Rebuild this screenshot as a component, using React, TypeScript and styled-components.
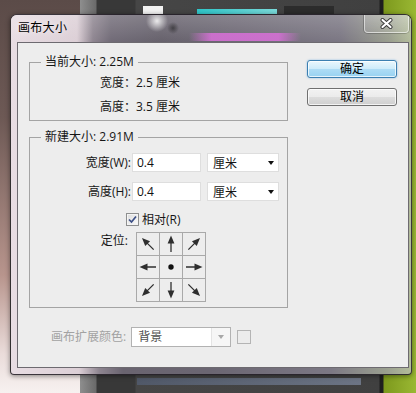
import * as React from 'react';
import styled, { createGlobalStyle } from 'styled-components';

const GlobalStyle = createGlobalStyle`
  html, body {
    margin: 0;
    padding: 0;
  }
  body {
    width: 416px;
    height: 393px;
    overflow: hidden;
    font-family: "Open Sans", "Noto Sans CJK SC", sans-serif;
    font-size: 12px;
    color: #161616;
  }
`;

/**
 * Blurred Photoshop workspace behind the dialog.
 */
const Desktop = styled.div`
  position: relative;
  width: 416px;
  height: 393px;
  overflow: hidden;
  background:
    linear-gradient(#f2f2f2, #f2f2f2) 143px 6px / 20px 8px no-repeat,
    linear-gradient(to right, #2fc6c9, #7adada) 197px 9px / 80px 5px no-repeat,
    linear-gradient(#2c2c2c, #2c2c2c) 284px 6px / 50px 8px no-repeat,
    linear-gradient(to right, #505868, #6c7484) 137px 378px / 224px 7px no-repeat,
    linear-gradient(to bottom, #5b4b48, #6d5955 30%, #b8958d 70%, #eadcda 90%, #f7f1f0) 0 0 / 80px 100% no-repeat,
    linear-gradient(to right, #8e8e8e 80px, #6a6a6a 96px, #383838 97px, #383838 135px, #464646 136px, #404040 379px, #1f1f1f 380px, #1f1f1f 383px, #7d991d 384px, #9ab833 416px);
`;

/**
 * Aero glass window frame (sides and bottom edge).
 */
const Window = styled.div`
  position: absolute;
  left: 10px;
  top: 14px;
  width: 402px;
  height: 361px;
  box-sizing: border-box;
  display: flex;
  flex-direction: column;
  overflow: hidden;
  border: 1px solid rgba(28, 24, 30, 0.85);
  border-radius: 7px 7px 4px 4px;
  box-shadow: 0 1px 5px rgba(0, 0, 0, 0.45);
  background: linear-gradient(to right, #e8dde3, #dccfd6 17%, #8e8590 22%, #6a6470 28%, #6b6672 50%, #7c7884 80%, #9ba090 94%, #b3bc9b);
`;

/**
 * Glass caption strip: blurred shapes of the workspace show through.
 */
const TitleBar = styled.div`
  height: 27px;
  flex: none;
  display: flex;
  align-items: flex-start;
  justify-content: space-between;
  padding: 0 2px 0 7px;
  background:
    radial-gradient(circle at 146px 6px, rgba(255, 255, 255, 0.85), rgba(255, 255, 255, 0) 11px),
    radial-gradient(circle at 162px 13px, rgba(25, 25, 25, 0.55), rgba(25, 25, 25, 0) 6px),
    linear-gradient(to right, rgba(200, 100, 200, 0), rgba(212, 112, 212, 0.9) 20%, rgba(212, 112, 212, 0.9) 80%, rgba(200, 100, 200, 0)) 178px 18px / 112px 8px no-repeat,
    linear-gradient(to bottom, rgba(255, 255, 255, 0.18), rgba(255, 255, 255, 0) 27px),
    linear-gradient(to right, #e8dde3 0px, #dccfd6 66px, #8e8590 82px, #716b77 100px, #66616c 150px, #6e6975 220px, #7b7783 330px, #999d8e 378px, #b3bc9b 400px);
`;

const Title = styled.div`
  margin-top: 5px;
  line-height: 16px;
  font-size: 12px;
  letter-spacing: 0.3px;
  color: #000;
  text-shadow: 0 0 6px rgba(255, 255, 255, 0.9);
`;

const CloseButton = styled.div`
  width: 45px;
  height: 18px;
  box-sizing: border-box;
  display: flex;
  align-items: center;
  justify-content: center;
  border: 1px solid rgba(255, 255, 255, 0.55);
  border-top: none;
  border-radius: 0 0 4px 4px;
  box-shadow: 0 0 0 1px rgba(0, 0, 0, 0.2);
  background: linear-gradient(rgba(255, 255, 255, 0.2), rgba(255, 255, 255, 0.08));
`;

const Client = styled.div`
  flex: 1;
  display: flex;
  flex-direction: column;
  box-sizing: border-box;
  margin: 0 2px 6px 6px;
  padding: 11px 0 0 11px;
  background: #ededed;
  border: 1px solid #6d6a70;
`;

const TopRow = styled.div`
  display: flex;
  align-items: flex-start;
`;

const LeftColumn = styled.div`
  display: flex;
  flex-direction: column;
  gap: 8px;
`;

const Group = styled.fieldset<{ $pad: string }>`
  margin: 0;
  min-width: 0;
  width: 259px;
  box-sizing: border-box;
  padding: ${p => p.$pad};
  border: 1px solid #a4a4a4;
`;

const Legend = styled.legend`
  margin-left: 11px;
  padding: 0 4px;
  line-height: 16px;
  font-size: 12px;
`;

const InfoRow = styled.div`
  padding-left: 70px;
  line-height: 24px;
  height: 24px;
`;

const FormRow = styled.div<{ $top: number }>`
  display: flex;
  align-items: center;
  margin-top: ${p => p.$top}px;
`;

const FieldLabel = styled.label<{ $width: number }>`
  width: ${p => p.$width}px;
  text-align: right;
  line-height: 16px;
`;

const TextBox = styled.div`
  width: 69px;
  height: 19px;
  margin-left: 1px;
  box-sizing: border-box;
  padding-left: 4px;
  line-height: 17px;
  background: #fff;
  border: 1px solid #dedede;
  color: #111;
`;

const UnitSelect = styled.div`
  width: 72px;
  height: 19px;
  margin-left: 6px;
  box-sizing: border-box;
  display: flex;
  align-items: center;
  justify-content: space-between;
  padding: 0 4px 0 5px;
  background: #fff;
  border: 1px solid #dedede;
`;

const Caret = styled.span<{ $color: string }>`
  width: 0;
  height: 0;
  border-left: 3.5px solid transparent;
  border-right: 3.5px solid transparent;
  border-top: 4px solid ${p => p.$color};
`;

const CheckRow = styled.div`
  display: flex;
  align-items: center;
  padding-left: 96px;
  margin-top: 12px;
  height: 13px;
`;

const CheckBox = styled.span`
  width: 13px;
  height: 13px;
  box-sizing: border-box;
  display: flex;
  align-items: center;
  justify-content: center;
  border: 1px solid #8e8f8f;
  background: linear-gradient(135deg, #dcdcdc, #fbfbfb);
  box-shadow: inset 0 0 0 1px #f4f4f4;
`;

const CheckText = styled.span`
  margin-left: 3px;
  line-height: 16px;
`;

const AnchorRow = styled.div`
  display: flex;
  align-items: flex-start;
  margin-top: 6px;
`;

const AnchorLabel = styled(FieldLabel)`
  padding-top: 1px;
`;

const AnchorGrid = styled.div`
  margin-left: 8px;
  display: grid;
  grid-template-columns: repeat(3, 22px);
  grid-template-rows: repeat(3, 22px);
  gap: 1px;
  padding: 1px;
  background: #a9a9a9;
`;

const AnchorCell = styled.div`
  background: #ededed;
  display: flex;
  align-items: center;
  justify-content: center;
`;

const ButtonColumn = styled.div`
  margin-left: 19px;
  margin-top: 6px;
  display: flex;
  flex-direction: column;
  gap: 10px;
`;

const DialogButton = styled.button<{ $primary?: boolean }>`
  width: 90px;
  height: 18px;
  box-sizing: border-box;
  padding: 0;
  font: inherit;
  font-size: 12px;
  line-height: 16px;
  color: #000;
  border-radius: 3px;
  border: 1px solid ${p => (p.$primary ? '#3c7fb1' : '#707070')};
  background: ${p =>
    p.$primary
      ? 'linear-gradient(#eaf7fd, #cdebfa 50%, #aedcf5 50%, #98d2f1)'
      : 'linear-gradient(#f2f2f2, #ebebeb 50%, #dddddd 50%, #cfcfcf)'};
  box-shadow: inset 0 0 0 1px rgba(255, 255, 255, 0.75)
    ${p => (p.$primary ? ', 0 0 2px rgba(60, 150, 220, 0.6)' : '')};
`;

const BottomRow = styled.div`
  display: flex;
  align-items: center;
  margin-top: 19px;
  padding-left: 22px;
  height: 20px;
`;

const DisabledLabel = styled.span`
  color: #a2a2a2;
  line-height: 16px;
`;

const DisabledSelect = styled.div`
  width: 100px;
  height: 20px;
  margin-left: 5px;
  box-sizing: border-box;
  display: flex;
  border: 1px solid #b2b2b2;
  background: #fff;
`;

const SelectText = styled.span`
  flex: 1;
  padding-left: 6px;
  line-height: 18px;
  color: #505050;
`;

const SelectArrow = styled.span`
  width: 18px;
  display: flex;
  align-items: center;
  justify-content: center;
  background: #f6f6f6;
  border-left: 1px solid #e4e4e4;
`;

const Swatch = styled.span`
  width: 14px;
  height: 14px;
  margin-left: 6px;
  box-sizing: border-box;
  border: 1px solid #b4b4b4;
  background: #ececec;
`;

const ANCHORS: (number | null)[] = [-45, 0, 45, -90, null, 90, -135, 180, 135];

/**
 * One arrow of the anchor grid, drawn pointing up and rotated.
 */
function Arrow({ angle }: { angle: number | null }) {
  if (angle === null) {
    return (
      <svg width="22" height="22" viewBox="0 0 22 22">
        <circle cx="11" cy="11" r="2.7" fill="#111" />
      </svg>
    );
  }
  return (
    <svg width="22" height="22" viewBox="0 0 22 22">
      <g transform={`rotate(${angle} 11 11)`}>
        <line x1="11" y1="19" x2="11" y2="8" stroke="#2e2e2e" strokeWidth="1.3" />
        <polygon points="11,2.5 7.6,10.5 14.4,10.5" fill="#2e2e2e" />
      </g>
    </svg>
  );
}

function App() {
  return (
    <Desktop>
      <GlobalStyle />
      <Window>
        <TitleBar>
          <Title>画布大小</Title>
          <CloseButton>
            <svg width="13" height="11" viewBox="0 0 13 11">
              <path d="M2.5 2 L10.5 9 M10.5 2 L2.5 9" stroke="#3a3a3a" strokeWidth="4" strokeLinecap="round" />
              <path d="M2.5 2 L10.5 9 M10.5 2 L2.5 9" stroke="#fff" strokeWidth="2.2" strokeLinecap="round" />
            </svg>
          </CloseButton>
        </TitleBar>
        <Client>
          <TopRow>
            <LeftColumn>
              <Group $pad="1px 0 1px 0">
                <Legend>当前大小: 2.25M</Legend>
                <InfoRow>宽度：2.5 厘米</InfoRow>
                <InfoRow>高度：3.5 厘米</InfoRow>
              </Group>
              <Group $pad="0 0 5px 0">
                <Legend>新建大小: 2.91M</Legend>
                <FormRow $top={8}>
                  <FieldLabel $width={101}>宽度(W):</FieldLabel>
                  <TextBox>0.4</TextBox>
                  <UnitSelect>
                    <span>厘米</span>
                    <Caret $color="#111" />
                  </UnitSelect>
                </FormRow>
                <FormRow $top={10}>
                  <FieldLabel $width={101}>高度(H):</FieldLabel>
                  <TextBox>0.4</TextBox>
                  <UnitSelect>
                    <span>厘米</span>
                    <Caret $color="#111" />
                  </UnitSelect>
                </FormRow>
                <CheckRow>
                  <CheckBox>
                    <svg width="9" height="9" viewBox="0 0 9 9">
                      <path d="M1 4.5 L3.5 7 L8 1.5" fill="none" stroke="#3c4f86" strokeWidth="1.7" />
                    </svg>
                  </CheckBox>
                  <CheckText>相对(R)</CheckText>
                </CheckRow>
                <AnchorRow>
                  <AnchorLabel $width={98}>定位:</AnchorLabel>
                  <AnchorGrid>
                    {ANCHORS.map((a, i) => (
                      <AnchorCell key={i}>
                        <Arrow angle={a} />
                      </AnchorCell>
                    ))}
                  </AnchorGrid>
                </AnchorRow>
              </Group>
            </LeftColumn>
            <ButtonColumn>
              <DialogButton $primary>确定</DialogButton>
              <DialogButton>取消</DialogButton>
            </ButtonColumn>
          </TopRow>
          <BottomRow>
            <DisabledLabel>画布扩展颜色:</DisabledLabel>
            <DisabledSelect>
              <SelectText>背景</SelectText>
              <SelectArrow>
                <Caret $color="#a8a8a8" />
              </SelectArrow>
            </DisabledSelect>
            <Swatch />
          </BottomRow>
        </Client>
      </Window>
    </Desktop>
  );
}

export default App;
